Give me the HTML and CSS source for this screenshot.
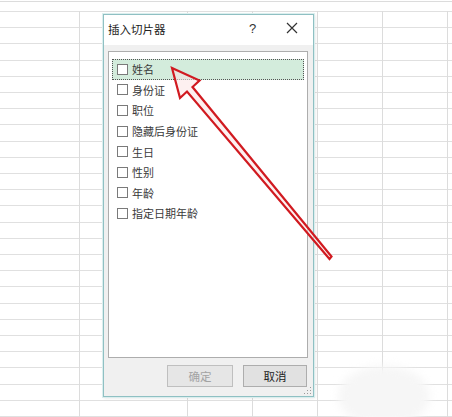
FILE: index.html
```html
<!DOCTYPE html>
<html lang="zh-CN">
<head>
  <meta charset="UTF-8">
  <title>插入切片器</title>
  <link rel="stylesheet" href="styles.css">
</head>
<body>

  <div class="sheet">

    <div class="dialog">
      <div class="dialog-title">
        <span class="title-text">插入切片器</span>
        <span class="title-help">?</span>
        <span class="title-close">
          <svg width="12" height="12" viewBox="0 0 12 12"><path d="M1 1 L11 11 M11 1 L1 11" stroke="#333" stroke-width="1.2" fill="none"/></svg>
        </span>
      </div>

      <div class="dialog-body">
        <div class="field-list">
          <div class="field active"><span class="check"></span>姓名</div>
          <div class="field"><span class="check"></span>身份证</div>
          <div class="field"><span class="check"></span>职位</div>
          <div class="field"><span class="check"></span>隐藏后身份证</div>
          <div class="field"><span class="check"></span>生日</div>
          <div class="field"><span class="check"></span>性别</div>
          <div class="field"><span class="check"></span>年龄</div>
          <div class="field"><span class="check"></span>指定日期年龄</div>
        </div>

        <div class="dialog-buttons">
          <button class="btn" disabled>确定</button>
          <button class="btn">取消</button>
        </div>
      </div>

      <span class="grip"></span>
    </div>

    <!-- red pointer arrow drawn over the screenshot -->
    <svg class="arrow" width="452" height="417" viewBox="0 0 452 417">
      <polygon points="172,68 199.5,80.5 192.5,87 331.5,256.5 329.5,259 187,91.5 180,98"
               fill="#fbe3e3" fill-opacity="0.55" stroke="#d11a20" stroke-width="2.2" stroke-linejoin="miter"/>
    </svg>

    <div class="smudge"></div>
  </div>

</body>
</html>
```

FILE: styles.css
```css
body {
  margin: 0;
  padding: 0;
  font-family: "Noto Sans CJK SC", "Noto Sans", sans-serif;
}

.sheet {
  position: relative;
  width: 452px;
  height: 417px;
  overflow: hidden;
  background-color: #fff;
  background-image:
    linear-gradient(to right, #dcdcdc 0 1px, transparent 1px),
    repeating-linear-gradient(to right, #dcdcdc 0 1px, transparent 1px 65px),
    linear-gradient(to bottom, #dcdcdc 0 1px, transparent 1px),
    repeating-linear-gradient(to bottom, #e0e0e0 0 1px, transparent 1px 16.2px);
  background-repeat: no-repeat;
  background-position: 79px 11px, 187px 11px, 0 1px, 0 11px;
  background-size: 1px 100%, 300px 100%, 100% 1px, 100% 500px;
}

.dialog {
  position: absolute;
  left: 103px;
  top: 14px;
  width: 209px;
  height: 381px;
  border: 1px solid #8fc0c3;
  box-shadow: 0 0 0 1px #dbeeee, 1px 1px 3px rgba(0, 0, 0, 0.12);
  background: #f0f0f0;
  display: flex;
  flex-direction: column;
}

.dialog-title {
  flex-shrink: 0;
  height: 30px;
  background: #fff;
  display: flex;
  align-items: center;
  padding-left: 4px;
  font-size: 11.5px;
  color: #222;
}

.title-text {
  flex: 1;
  margin-top: -2px;
}

.title-help {
  width: 14px;
  margin-right: 23px;
  font-family: "Liberation Sans", sans-serif;
  font-size: 13px;
  color: #333;
  margin-top: -3px;
}

.title-close {
  width: 12px;
  margin-right: 15px;
  display: flex;
  margin-top: -4px;
}

.dialog-body {
  flex: 1;
  display: flex;
  flex-direction: column;
  padding: 6px 5px 0 4px;
}

.field-list {
  box-sizing: border-box;
  height: 307px;
  border: 1px solid #adadad;
  background: #fff;
  padding: 7px 3px 0 3px;
  display: flex;
  flex-direction: column;
}

.field {
  flex-shrink: 0;
  height: 20.6px;
  display: flex;
  align-items: center;
  padding-left: 5px;
  font-size: 11px;
  color: #3a3a3a;
  box-sizing: border-box;
}

.field.active {
  background: #d3ecdc;
  outline: 1px dotted #555;
  outline-offset: -1px;
}

.check {
  width: 9px;
  height: 9px;
  border: 1px solid #7a7a7a;
  background: #fff;
  margin-right: 4px;
}

.dialog-buttons {
  display: flex;
  justify-content: flex-end;
  gap: 10px;
  margin-top: 7px;
  padding-right: 1px;
}

.btn {
  width: 66px;
  height: 22px;
  border: 1px solid #adadad;
  background: #e1e1e1;
  font-family: "Noto Sans CJK SC", sans-serif;
  font-size: 11.5px;
  color: #222;
  padding: 0;
}

.btn:last-child {
  width: 64px;
}

.btn:disabled {
  color: #a3a3a3;
  border-color: #bfbfbf;
  background: #e6e6e6;
}

.grip {
  position: absolute;
  right: 2px;
  bottom: 2px;
  width: 8px;
  height: 8px;
  background-image: radial-gradient(circle, #9a9a9a 0.8px, transparent 1px);
  background-size: 3px 3px;
  clip-path: polygon(100% 0, 100% 100%, 0 100%);
}

.arrow {
  position: absolute;
  left: 0;
  top: 0;
  pointer-events: none;
}

.smudge {
  position: absolute;
  left: 338px;
  top: 366px;
  width: 92px;
  height: 60px;
  border-radius: 50%;
  background: #f6f6f6;
  filter: blur(4px);
}
```
